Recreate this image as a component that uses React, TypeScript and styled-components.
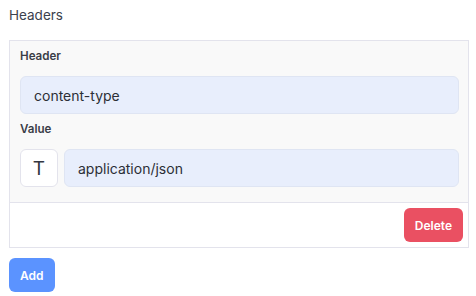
import styled, { createGlobalStyle } from "styled-components";

const GlobalStyle = createGlobalStyle`
  body {
    margin: 0;
    background: #ffffff;
    font-family: "Inter", "Noto Sans", sans-serif;
    color: #333640;
  }
`;

const Page = styled.div`
  padding: 0 7px 0 9px;
  width: 460px;
`;

const Title = styled.div`
  padding-top: 5px;
  font-size: 13.5px;
  line-height: 20px;
  color: #3b414d;
  margin-bottom: 15px;
`;

const Card = styled.div`
  border: 1px solid #e3e3ec;
  background: #ffffff;
`;

const CardBody = styled.div`
  background: #f9f9f9;
  padding: 7px 9px 15px 10px;
  border-bottom: 1px solid #e3e3ec;
`;

const Label = styled.label<{ $gap?: number }>`
  display: block;
  font-size: 11.6px;
  font-weight: 600;
  line-height: 16px;
  color: #3a3d47;
  margin-top: ${(p) => p.$gap ?? 0}px;
  margin-bottom: 12px;
`;

const Input = styled.input`
  box-sizing: border-box;
  flex: 1;
  min-width: 0;
  width: 100%;
  height: 38px;
  padding: 0 13px;
  border: 1px solid #dfe5f3;
  border-radius: 6px;
  background: #e8eefc;
  font-family: inherit;
  font-size: 14px;
  color: #2c2f36;
  outline: none;
`;

const Row = styled.div`
  display: flex;
  gap: 6px;
`;

const TypeBox = styled.div`
  box-sizing: border-box;
  flex: 0 0 38px;
  height: 38px;
  display: flex;
  align-items: center;
  justify-content: center;
  background: #ffffff;
  border: 1px solid #e3e3ec;
  border-radius: 6px;
  font-size: 19px;
  color: #333640;
`;

const Footer = styled.div`
  display: flex;
  justify-content: flex-end;
  padding: 5px;
`;

const Button = styled.button<{ $color: string }>`
  height: 34px;
  padding: 0 11px;
  border: none;
  border-radius: 6px;
  background: ${(p) => p.$color};
  color: #ffffff;
  font-family: inherit;
  font-size: 12px;
  font-weight: 600;
  cursor: pointer;
`;

const AddRow = styled.div`
  margin-top: 10px;
`;

export default function App() {
  return (
    <>
      <GlobalStyle />
      <Page>
        <Title>Headers</Title>
        <Card>
          <CardBody>
            <Label>Header</Label>
            <Input defaultValue="content-type" />
            <Label $gap={7}>Value</Label>
            <Row>
              <TypeBox>T</TypeBox>
              <Input defaultValue="application/json" />
            </Row>
          </CardBody>
          <Footer>
            <Button $color="#ea5062">Delete</Button>
          </Footer>
        </Card>
        <AddRow>
          <Button $color="#5b93ff">Add</Button>
        </AddRow>
      </Page>
    </>
  );
}
